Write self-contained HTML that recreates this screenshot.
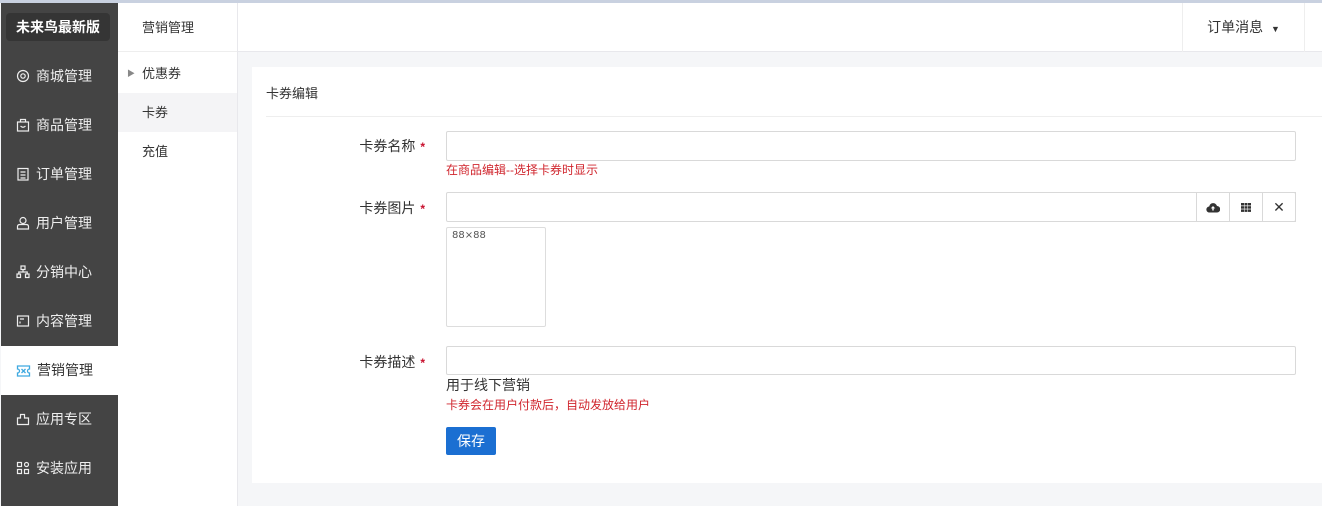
<!DOCTYPE html>
<html><head><meta charset="utf-8"><style>
*{margin:0;padding:0;box-sizing:border-box}
body{width:1322px;height:506px;overflow:hidden;background:#f5f6f8;font-family:"Liberation Sans","Noto Sans CJK SC",sans-serif;font-size:14px;color:#333;position:relative}
.top{position:absolute;left:0;top:0;width:1322px;height:3px;background:#c9d1e0}
.side{position:absolute;left:1px;top:3px;width:117px;height:503px;background:#444}
.logo{position:absolute;left:5px;top:10px;width:104px;height:28px;background:#353535;border-radius:4px;color:#fff;font-weight:bold;font-size:14px;line-height:28px;text-align:center}
.mi{position:absolute;left:0;width:117px;height:49px;line-height:49px;color:#eee;font-size:14px;padding-left:15px}
.mi svg{vertical-align:-2px;margin-right:6px}
.mi.act{background:#fff;color:#333}
.col2{position:absolute;left:118px;top:3px;width:120px;height:503px;background:#fff;border-right:1px solid #e8e8ec}
.c2h{height:49px;border-bottom:1px solid #eee;line-height:49px;padding-left:24px;font-size:13px}
.c2i{height:39px;line-height:39px;padding-left:24px;font-size:13px}
.head{position:absolute;left:238px;top:3px;width:1084px;height:49px;background:#fff;border-bottom:1px solid #e8e8ec}
.msg{position:absolute;left:944px;top:0;width:123px;height:49px;border-left:1px solid #eee;border-right:1px solid #eee;line-height:49px;text-align:center;font-size:14px}
.panel{position:absolute;left:252px;top:67px;width:1070px;height:416px;background:#fff}
.pt{position:absolute;left:14px;top:16px;font-size:13px}
.pl{position:absolute;left:14px;top:49px;right:0;border-top:1px solid #eee}
.lbl{position:absolute;width:163px;text-align:right;left:10px;font-size:14px}
.lbl b{color:#c8102e;font-size:12px;margin-left:5px}
.inp{position:absolute;left:194px;width:850px;height:30px;border:1px solid #d9d9d9;border-radius:2px;background:#fff}
.red{position:absolute;left:194px;color:#d0262e;font-size:12px}
.btns{position:absolute;right:-1px;top:-1px;height:30px;display:flex}
.btns div{width:34px;height:30px;border:1px solid #d9d9d9;margin-left:-1px;display:flex;align-items:center;justify-content:center;font-size:14px;color:#333}
</style></head><body>
<div class="top"></div>
<div class="side">
<div class="logo">未来鸟最新版</div>
<div class="mi" style="top:49px"><svg width="14" height="14" viewBox="0 0 14 14" fill="none" stroke="#eee" stroke-width="1.2"><circle cx="7" cy="7" r="5.5"/><circle cx="7" cy="7" r="2.2"/></svg>商城管理</div>
<div class="mi" style="top:98px"><svg width="14" height="14" viewBox="0 0 14 14" fill="none" stroke="#eee" stroke-width="1.2"><rect x="1.5" y="4" width="11" height="9"/><path d="M4.5 4V1.5h5V4M4.5 8q2.5 2.5 5 0"/></svg>商品管理</div>
<div class="mi" style="top:147px"><svg width="14" height="14" viewBox="0 0 14 14" fill="none" stroke="#eee" stroke-width="1.2"><rect x="2" y="1.5" width="10" height="11.5"/><path d="M4.5 5h5M4.5 8h5M4.5 11h5"/></svg>订单管理</div>
<div class="mi" style="top:196px"><svg width="14" height="14" viewBox="0 0 14 14" fill="none" stroke="#eee" stroke-width="1.2"><circle cx="7" cy="4.5" r="3"/><path d="M1.5 13v-2.5q0-2 2.5-2h6q2.5 0 2.5 2V13z"/></svg>用户管理</div>
<div class="mi" style="top:245px"><svg width="14" height="14" viewBox="0 0 14 14" fill="none" stroke="#eee" stroke-width="1.2"><rect x="5" y="1" width="4" height="3.5"/><rect x="1" y="9" width="3.5" height="3.5"/><rect x="9.5" y="9" width="3.5" height="3.5"/><path d="M7 4.5v2.5M2.8 9V7h8.4v2"/></svg>分销中心</div>
<div class="mi" style="top:294px"><svg width="14" height="14" viewBox="0 0 14 14" fill="none" stroke="#eee" stroke-width="1.2"><rect x="1.5" y="2" width="11" height="10"/><path d="M4 5h4M4 7.5v2"/></svg>内容管理</div>
<div class="mi act" style="top:343px"><svg width="15" height="12" viewBox="0 0 14 12" fill="none" stroke="#3fa9e0" stroke-width="1.3"><path d="M1 1h12v3a2 2 0 0 0 0 4v3H1V8a2 2 0 0 0 0-4z"/><path d="M5 4l4 4M9 4l-4 4"/></svg>营销管理</div>
<div class="mi" style="top:392px"><svg width="14" height="14" viewBox="0 0 14 14" fill="none" stroke="#eee" stroke-width="1.2"><path d="M1.5 6h3V2.5h4V6h4v6.5h-11z"/></svg>应用专区</div>
<div class="mi" style="top:441px"><svg width="14" height="14" viewBox="0 0 14 14" fill="none" stroke="#eee" stroke-width="1.2"><rect x="1.5" y="1.5" width="4" height="4"/><circle cx="10.5" cy="3.5" r="2"/><rect x="1.5" y="8.5" width="4" height="4"/><rect x="8.5" y="8.5" width="4" height="4"/></svg>安装应用</div>
</div>
<div class="col2">
<div class="c2h">营销管理</div>
<div class="c2i" style="margin-top:2px;position:relative"><span style="position:absolute;left:9px;font-size:8px;color:#888">▶</span>优惠券</div>
<div class="c2i" style="background:#f4f4f6">卡券</div>
<div class="c2i">充值</div>
</div>
<div class="head"><div class="msg">订单消息 <span style="font-size:9px;margin-left:4px">▼</span></div></div>
<div class="panel">
<div class="pt">卡券编辑</div>
<div class="pl"></div>
<div class="lbl" style="top:69px">卡券名称<b>*</b></div>
<div class="inp" style="top:64px"></div>
<div class="red" style="top:94px">在商品编辑--选择卡券时显示</div>
<div class="lbl" style="top:131px">卡券图片<b>*</b></div>
<div class="inp" style="top:125px"><div class="btns"><div><svg width="14" height="11" viewBox="0 0 14 11"><path d="M3.5 10.5a3 3 0 0 1-.3-6A4 4 0 0 1 11 4a3.2 3.2 0 0 1 0 6.5z" fill="#333"/><path d="M7 4l-2.2 2.4h1.5V8.5h1.4V6.4h1.5z" fill="#fff"/></svg></div><div><svg width="10" height="9" viewBox="0 0 10 9" fill="#333"><rect x="0" y="0" width="3" height="2.5"/><rect x="3.5" y="0" width="3" height="2.5"/><rect x="7" y="0" width="3" height="2.5"/><rect x="0" y="3.2" width="3" height="2.5"/><rect x="3.5" y="3.2" width="3" height="2.5"/><rect x="7" y="3.2" width="3" height="2.5"/><rect x="0" y="6.4" width="3" height="2.5"/><rect x="3.5" y="6.4" width="3" height="2.5"/><rect x="7" y="6.4" width="3" height="2.5"/></svg></div><div>✕</div></div></div>
<div style="position:absolute;left:194px;top:160px;width:100px;height:100px;border:1px solid #ddd;border-radius:2px;font-size:10px;color:#555;padding:2px 5px;font-family:'DejaVu Sans',sans-serif">88×88</div>
<div class="lbl" style="top:285px">卡券描述<b>*</b></div>
<div class="inp" style="top:279px;height:29px"></div>
<div style="position:absolute;left:194px;top:308px;font-size:14px">用于线下营销</div>
<div class="red" style="top:329px">卡券会在用户付款后，自动发放给用户</div>
<div style="position:absolute;left:194px;top:360px;width:50px;height:28px;background:#1b6fd2;border-radius:2px;color:#fff;font-size:14px;line-height:28px;text-align:center">保存</div>
</div>
</body></html>
